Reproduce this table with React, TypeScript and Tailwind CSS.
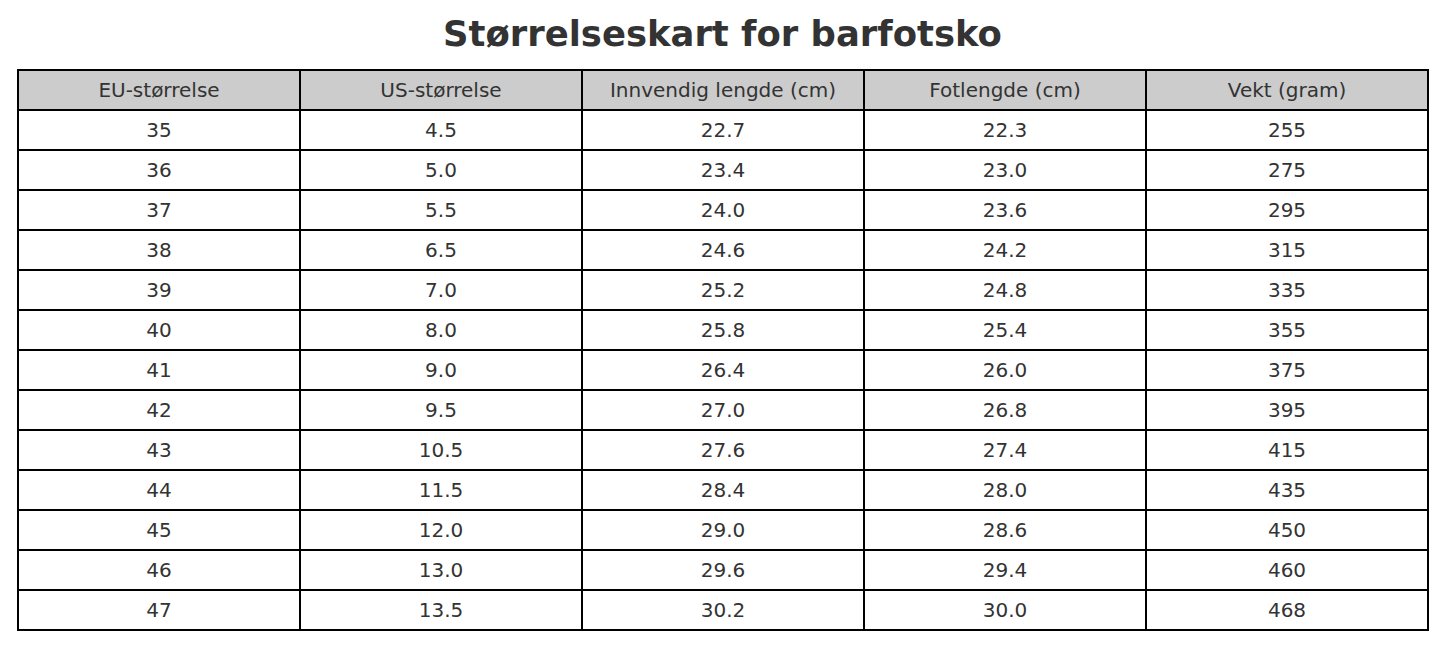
const HEADERS = [
  "EU-størrelse",
  "US-størrelse",
  "Innvendig lengde (cm)",
  "Fotlengde (cm)",
  "Vekt (gram)",
]

const ROWS: string[][] = [
  ["35", "4.5", "22.7", "22.3", "255"],
  ["36", "5.0", "23.4", "23.0", "275"],
  ["37", "5.5", "24.0", "23.6", "295"],
  ["38", "6.5", "24.6", "24.2", "315"],
  ["39", "7.0", "25.2", "24.8", "335"],
  ["40", "8.0", "25.8", "25.4", "355"],
  ["41", "9.0", "26.4", "26.0", "375"],
  ["42", "9.5", "27.0", "26.8", "395"],
  ["43", "10.5", "27.6", "27.4", "415"],
  ["44", "11.5", "28.4", "28.0", "435"],
  ["45", "12.0", "29.0", "28.6", "450"],
  ["46", "13.0", "29.6", "29.4", "460"],
  ["47", "13.5", "30.2", "30.0", "468"],
]

export default function App() {
  return (
    <div className="h-[648px] w-[1445px] bg-white font-['DejaVu_Sans',sans-serif] text-[#333333]">
      <h1 className="pt-[12px] text-center text-[35.4px] font-bold leading-[44px]">
        Størrelseskart for barfotsko
      </h1>
      <table className="ml-[17px] mt-[13px] w-[1412px] table-fixed border-collapse">
        <thead>
          <tr className="h-[40px] bg-[#cccccc]">
            {HEADERS.map((h) => (
              <th
                key={h}
                className="border-2 border-black p-0 text-center text-[20px] font-normal leading-[24px]"
              >
                {h}
              </th>
            ))}
          </tr>
        </thead>
        <tbody>
          {ROWS.map((row) => (
            <tr key={row[0]} className="h-[40px]">
              {row.map((cell, i) => (
                <td
                  key={i}
                  className="border-2 border-black p-0 text-center text-[20px] leading-[24px]"
                >
                  {cell}
                </td>
              ))}
            </tr>
          ))}
        </tbody>
      </table>
    </div>
  )
}
